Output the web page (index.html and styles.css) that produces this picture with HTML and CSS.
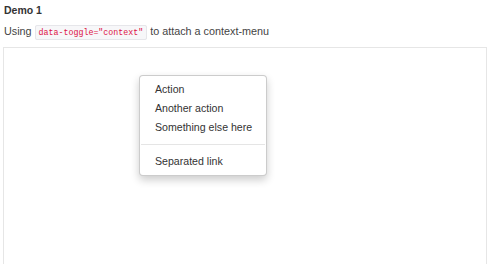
FILE: index.html
```html
<!DOCTYPE html>
<html>
<head>
<meta charset="utf-8">
<link rel="stylesheet" href="styles.css">
</head>
<body>
<div class="page">
  <h4 class="title">Demo 1</h4>
  <p class="lead">Using <code class="code">data-toggle="context"</code> to attach a context-menu</p>
  <div class="area">
    <ul class="menu">
      <li class="item">Action</li>
      <li class="item">Another action</li>
      <li class="item">Something else here</li>
      <li class="divider"></li>
      <li class="item">Separated link</li>
    </ul>
  </div>
</div>
</body>
</html>
```
FILE: styles.css
```css
html, body { margin: 0; padding: 0; background: #fff; overflow: hidden; }
body { font-family: "Liberation Sans", Arial, sans-serif; color: #333; font-size: 11px; }
.page { padding: 0 8px 0 3px; }
.title { margin: 0; padding: 3px 0 0 1px; font-size: 10.5px; font-weight: bold; line-height: 14px; color: #333; }
.lead { margin: 6px 0 0 1px; line-height: 16px; font-size: 10.8px; color: #444; }
.code { font-family: "Liberation Mono", "Courier New", monospace; font-size: 8.3px; color: #d14; background: #f7f7f9; border: 1px solid #e6e6ea; border-radius: 2px; padding: 2px 3px; }
.area { margin-top: 6px; height: 217px; border: 1px solid #e6e6e6; border-bottom: none; position: relative; }
.menu { position: absolute; left: 135px; top: 27px; width: 126px; margin: 0; padding: 4px 0; list-style: none; background: #fff; border: 1px solid rgba(0,0,0,0.2); border-radius: 4px; box-shadow: 0 4px 8px rgba(0,0,0,0.2); }
.item { padding: 2px 15px 2px 15px; line-height: 15px; font-size: 10.6px; color: #333; white-space: nowrap; }
.divider { height: 1px; margin: 7px 1px; background: #e5e5e5; }
```
